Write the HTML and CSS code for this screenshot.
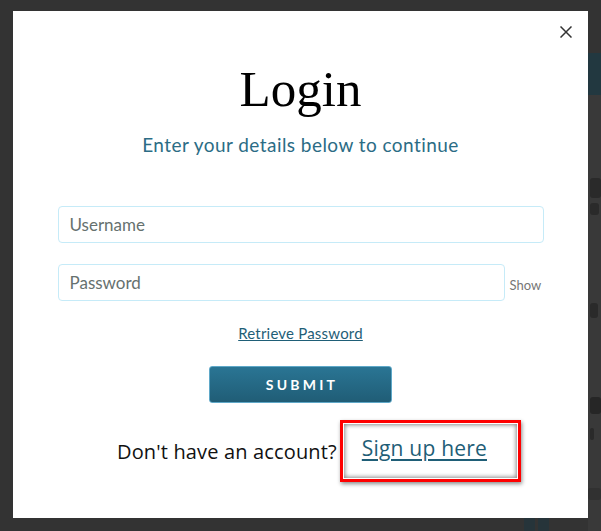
FILE: index.html
```html
<!DOCTYPE html>
<html>
<head>
<meta charset="utf-8">
<link rel="stylesheet" href="styles.css">
</head>
<body>
<div class="backdrop">
  <div class="bd-top"></div>
  <div class="bd-band"></div>
  <div class="bd-blot k1"></div>
  <div class="bd-blot k2"></div>
  <div class="bd-blot k3"></div>
  <div class="bd-blot k4"></div>
  <div class="bd-blot k5"></div>
  <div class="bd-blot k6"></div>
  <div class="bd-bar b1"></div>
  <div class="bd-bar b2"></div>
</div>
<div class="modal">
  <button class="close" aria-label="Close">
    <svg width="12" height="12" viewBox="0 0 12 12"><path d="M0.5 0.5 L11.5 11.5 M11.5 0.5 L0.5 11.5" stroke="#333" stroke-width="1.5" fill="none"/></svg>
  </button>
  <h1 class="title">Login</h1>
  <p class="subtitle">Enter your details below to continue</p>
  <form class="form">
    <input class="field" type="text" placeholder="Username">
    <div class="pw-row">
      <input class="field pw" type="password" placeholder="Password">
      <span class="show">Show</span>
    </div>
    <a class="retrieve" href="#">Retrieve Password</a>
    <button class="submit" type="button">SUBMIT</button>
  </form>
  <div class="signup">
    <span class="noacc">Don't have an account?</span>
    <span class="hl"><a class="signlink" href="#">Sign up here</a></span>
  </div>
</div>
</body>
</html>
```
FILE: styles.css
```css
html, body {
  margin: 0;
  padding: 0;
}
body {
  width: 601px;
  height: 531px;
  background: #333333;
  overflow: hidden;
  position: relative;
  font-family: "Lato", "Open Sans", sans-serif;
}
.backdrop {
  position: absolute;
  left: 588px;
  top: 0;
  width: 13px;
  height: 531px;
  background: #393939;
}
.bd-top {
  position: absolute;
  left: 0;
  top: 0;
  width: 13px;
  height: 53px;
  background: #333333;
}
.bd-band {
  position: absolute;
  left: 0;
  top: 53px;
  width: 13px;
  height: 42px;
  background: #223840;
}
.bd-blot {
  position: absolute;
  left: 2px;
  background: #2a2a2a;
  border-radius: 3px;
}
.k1 { top: 178px; width: 11px; height: 20px; }
.k2 { top: 203px; width: 9px; height: 12px; }
.k3 { top: 303px; width: 8px; height: 15px; }
.k4 { top: 397px; width: 11px; height: 17px; background: #262626; }
.k5 { top: 428px; width: 4px; height: 12px; }
.k6 { top: 488px; left: 0; width: 13px; height: 12px; background: #313131; }
.bd-bar {
  position: absolute;
  top: 518px;
  width: 11px;
  height: 13px;
  background: #26343a;
}
.b1 { left: -64px; }
.b2 { left: -50px; }

.modal {
  position: relative;
  margin: 11px 0 0 13px;
  width: 575px;
  height: 507px;
  background: #ffffff;
  box-sizing: border-box;
  padding-top: 56px;
  display: flex;
  flex-direction: column;
  align-items: center;
}
.close {
  position: absolute;
  right: 16px;
  top: 15px;
  width: 12px;
  height: 12px;
  padding: 0;
  border: 0;
  background: none;
  display: block;
}
.close svg { display: block; }
.title {
  margin: 0;
  font-family: "Liberation Serif", "Times New Roman", serif;
  font-weight: normal;
  font-size: 51px;
  line-height: 44px;
  color: #000;
}
.subtitle {
  margin: 22px 0 0;
  font-size: 19px;
  line-height: 24px;
  color: #2b6c85;
  letter-spacing: 0.45px;
}
.form {
  margin-top: 49px;
  width: 486px;
  display: flex;
  flex-direction: column;
  align-items: center;
}
.field {
  box-sizing: border-box;
  width: 486px;
  height: 37px;
  border: 1px solid #c6ebf8;
  border-radius: 4px;
  padding: 0 11px;
  font-family: "Lato", "Open Sans", sans-serif;
  font-size: 17px;
  color: #333;
  outline: none;
  background: #fff;
}
.field::placeholder {
  color: #66716f;
}
.pw-row {
  margin-top: 21px;
  width: 486px;
  display: flex;
  align-items: center;
}
.field.pw {
  width: 447px;
}
.show {
  margin-left: 5px;
  font-size: 13px;
  color: #767676;
  padding-top: 5px;
}
.retrieve {
  margin-top: 23px;
  font-size: 15px;
  line-height: 18px;
  color: #1f5e77;
  text-decoration: underline;
  letter-spacing: 0.2px;
}
.submit {
  margin-top: 24px;
  width: 183px;
  height: 37px;
  border: 1px solid #5fa8c8;
  border-radius: 3px;
  background: linear-gradient(#2a7594, #205d76);
  color: #fff;
  font-family: "Lato", "Open Sans", sans-serif;
  font-weight: bold;
  font-size: 14px;
  letter-spacing: 3.2px;
  padding: 0 0 0 3px;
}
.signup {
  align-self: flex-start;
  margin: 17px 0 0 104px;
  display: flex;
  align-items: center;
}
.noacc {
  font-family: "Open Sans", "Noto Sans", sans-serif;
  font-size: 20px;
  letter-spacing: 0.15px;
  color: #111;
  margin-right: 3px;
}
.hl {
  display: block;
  box-sizing: border-box;
  width: 181px;
  height: 62px;
  border: 3px solid #ff0000;
  box-shadow: inset 0 0 0 1px #fff, inset 0 0 4px 2px #8a8a8a, 1px 2px 4px rgba(0,0,0,0.45);
  padding: 11px 0 0 19px;
}
.signlink {
  font-family: "Open Sans", "Noto Sans", sans-serif;
  font-size: 21px;
  font-weight: 500;
  letter-spacing: 0.2px;
  color: #1f5e77;
  text-decoration: underline;
  text-decoration-thickness: 2px;
  text-underline-offset: 3px;
}
```
